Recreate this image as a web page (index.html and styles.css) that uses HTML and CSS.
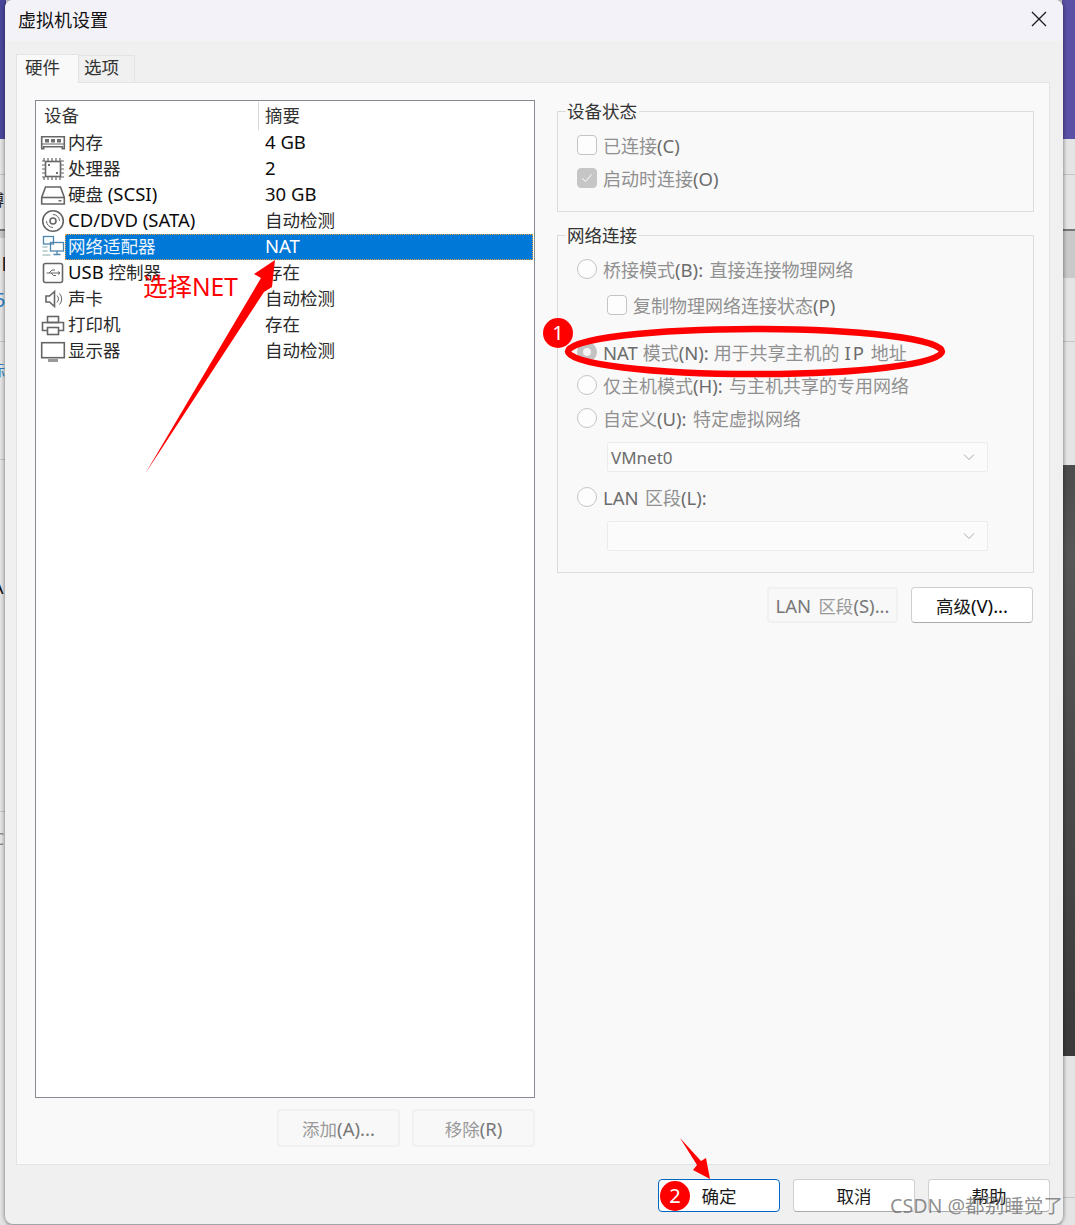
FILE: index.html
```html
<!DOCTYPE html>
<html lang="zh-CN">
<head>
<meta charset="utf-8">
<title>虚拟机设置</title>
<link rel="stylesheet" href="styles.css">
</head>
<body>
<div class="page">
  <div class="backdrop backdrop-left">
    <div class="band band-purple h139"></div>
    <div class="band h36 line-b"></div>
    <div class="band h54"><span class="frag frag-top">博</span></div>
    <div class="band band-gray h9"></div>
    <div class="band h104 line-b"><span class="frag frag-black">|||</span><span class="frag frag-five">5</span></div>
    <div class="band h118 line-b"><span class="frag frag-blue">标</span></div>
    <div class="band h352 line-b"><span class="frag frag-a">A</span></div>
    <div class="band h413"><span class="frag frag-c">CU</span></div>
  </div>
  <div class="backdrop backdrop-right">
    <div class="band band-purple h139"></div>
    <div class="band h36 line-b"></div>
    <div class="band h54"></div>
    <div class="band band-gray h49"></div>
    <div class="band h64 line-b"></div>
    <div class="band h123"></div>
    <div class="band band-dark h591"></div>
    <div class="band h142 line-b"></div>
    <div class="band h27"></div>
  </div>

  <main class="dialog">
    <header class="titlebar">
      <h1 class="title">虚拟机设置</h1>
      <svg class="close" viewBox="0 0 16 16" width="16" height="16"><path d="M1 1L15 15M15 1L1 15"/></svg>
    </header>

    <nav class="tabs">
      <div class="tab tab-active">硬件</div>
      <div class="tab">选项</div>
    </nav>

    <section class="panel">
      <div class="left-col">
        <div class="device-list">
          <div class="list-head">
            <div class="head-device">设备</div>
            <div class="head-summary">摘要</div>
          </div>

          <div class="row">
            <svg class="ico" viewBox="0 0 26 26"><path d="M1.700 6.700h22.600v12h-2v-2h-18.600v2h-2z"/><path class="t" d="M1.700 14h22.600"/><rect class="f" x="5" y="9" width="4" height="3.500"/><rect class="f" x="11" y="9" width="4" height="3.500"/><rect class="f" x="17" y="9" width="4" height="3.500"/></svg>
            <div class="cells"><span class="name">内存</span><span class="sum"><span class="l">4 GB</span></span></div>
          </div>
          <div class="row">
            <svg class="ico" viewBox="0 0 26 26"><rect x="5.500" y="5.500" width="15" height="15"/><path class="d" d="M4 2v3M8 2v3M12 2v3M16 2v3M20 2v3M4 21v3M8 21v3M12 21v3M16 21v3M20 21v3M2 5h3M2 9h3M2 13h3M2 17h3M2 21h3M21 5h3M21 9h3M21 13h3M21 17h3M21 21h3"/><rect class="f" x="8" y="8" width="2" height="2"/><rect class="f" x="16" y="16" width="2" height="2"/></svg>
            <div class="cells"><span class="name">处理器</span><span class="sum"><span class="l">2</span></span></div>
          </div>
          <div class="row">
            <svg class="ico" viewBox="0 0 26 26"><path d="M5.500 5h15l3.800 10.500v6.500h-22.600v-6.500z"/><path d="M1.700 15.500h22.600"/><rect class="f" x="18.500" y="18" width="3" height="1.500"/></svg>
            <div class="cells"><span class="name">硬盘<span class="l"> (SCSI)</span></span><span class="sum"><span class="l">30 GB</span></span></div>
          </div>
          <div class="row">
            <svg class="ico" viewBox="0 0 26 26"><circle cx="13" cy="13" r="10.300"/><circle cx="13" cy="13" r="3"/><path class="t" d="M13 6.500a6.500 6.500 0 0 1 6.500 6.500M6.500 13a6.500 6.500 0 0 0 6.500 6.500"/></svg>
            <div class="cells"><span class="name"><span class="l">CD/DVD (SATA)</span></span><span class="sum">自动检测</span></div>
          </div>
          <div class="row">
            <svg class="ico ico-net" viewBox="0 0 26 26"><rect x="3.500" y="2.500" width="10" height="7.500"/><rect x="10.500" y="8.500" width="13" height="8.500"/><path d="M17 17v3M13.500 20.500h7"/><path class="d" d="M2.500 13h5M2.500 17h5M2.500 21h8"/></svg>
            <div class="cells cells-selected"><span class="name">网络适配器</span><span class="sum"><span class="l">NAT</span></span></div>
          </div>
          <div class="row">
            <svg class="ico" viewBox="0 0 26 26"><rect x="3.500" y="3.500" width="19" height="19" rx="2"/><path class="t" d="M6.500 13h13M9 13l3-3h3M11 13l2.500 2.500h2.500"/><path class="t" d="M18 11.500l2 1.500-2 1.500"/></svg>
            <div class="cells"><span class="name"><span class="l">USB </span>控制器</span><span class="sum">存在</span></div>
          </div>
          <div class="row">
            <svg class="ico" viewBox="0 0 26 26"><path d="M6 10h3.500l5-4.500v15l-5-4.500h-3.500z"/><path class="t" d="M17 9.500a5 5 0 0 1 0 7M19.500 7.500a8 8 0 0 1 0 11"/></svg>
            <div class="cells"><span class="name">声卡</span><span class="sum">自动检测</span></div>
          </div>
          <div class="row">
            <svg class="ico" viewBox="0 0 26 26"><rect x="7.500" y="4.500" width="11" height="6"/><path d="M7 18.500h-4.500v-8h21v8h-4.500"/><rect x="7.500" y="15.500" width="11" height="7"/></svg>
            <div class="cells"><span class="name">打印机</span><span class="sum">存在</span></div>
          </div>
          <div class="row">
            <svg class="ico" viewBox="0 0 26 26"><rect x="1.700" y="4.700" width="22.600" height="15"/><path class="w" d="M8 22.500h10"/></svg>
            <div class="cells"><span class="name">显示器</span><span class="sum">自动检测</span></div>
          </div>
        </div>

        <div class="btn-row btn-row-left">
          <button class="btn btn-off btn-add" disabled>添加<span class="l">(A)...</span></button>
          <button class="btn btn-off btn-add" disabled>移除<span class="l">(R)</span></button>
        </div>
      </div>

      <div class="right-col">
        <fieldset class="group group-status">
          <legend class="legend">设备状态</legend>
          <div class="opt"><span class="box"></span><span class="opt-text">已连接<span class="l">(C)</span></span></div>
          <div class="opt"><span class="box box-checked"><svg viewBox="0 0 20 20" width="20" height="20"><path d="M5.500 10.500l3 3 6-7"/></svg></span><span class="opt-text">启动时连接<span class="l">(O)</span></span></div>
        </fieldset>

        <fieldset class="group group-net">
          <legend class="legend">网络连接</legend>
          <div class="opt"><span class="radio"></span><span class="opt-text">桥接模式<span class="l">(B): </span>直接连接物理网络</span></div>
          <div class="opt opt-sub"><span class="box"></span><span class="opt-text">复制物理网络连接状态<span class="l">(P)</span></span></div>
          <div class="opt opt-nat"><span class="radio radio-on"></span><span class="opt-text nat-text"><span class="l">NAT </span>模式<span class="l">(N): </span>用于共享主机的<span class="l"> </span><span class="l l-wide">IP</span><span class="l"> </span>地址</span></div>
          <div class="opt"><span class="radio"></span><span class="opt-text">仅主机模式<span class="l">(H): </span>与主机共享的专用网络</span></div>
          <div class="opt"><span class="radio"></span><span class="opt-text">自定义<span class="l">(U): </span>特定虚拟网络</span></div>
          <div class="combo combo-first"><span>VMnet0</span><svg viewBox="0 0 12 8" width="12" height="8"><path d="M1 1.500l5 5 5-5"/></svg></div>
          <div class="opt opt-lan"><span class="radio"></span><span class="opt-text"><span class="l">LAN </span>区段<span class="l">(L):</span></span></div>
          <div class="combo combo-second"><span></span><svg viewBox="0 0 12 8" width="12" height="8"><path d="M1 1.500l5 5 5-5"/></svg></div>
        </fieldset>

        <div class="btn-row btn-row-right">
          <button class="btn btn-off btn-lan" disabled><span class="l">LAN </span>区段<span class="l">(S)...</span></button>
          <button class="btn btn-adv">高级<span class="l">(V)...</span></button>
        </div>
      </div>
    </section>

    <footer class="footer">
      <button class="btn btn-foot btn-primary">确定</button>
      <button class="btn btn-foot">取消</button>
      <button class="btn btn-foot">帮助</button>
    </footer>
  </main>

  <svg class="marks" viewBox="0 0 1075 1225" width="1075" height="1225">
    <ellipse class="ring" cx="755" cy="351.500" rx="187" ry="22.500"/>
    <polygon class="arrow" points="145,474 261,278 254,274 275,260 272,287 264,292"/>
    <polygon class="arrow" points="680,1138 701,1161 706,1158 710,1179 693,1170 697,1165"/>
  </svg>
  <span class="note">选择NET</span>
  <span class="badge badge-one">1</span>
  <span class="badge badge-two">2</span>
  <span class="watermark">CSDN @都别睡觉了</span>
</div>
</body>
</html>
```

FILE: styles.css
```css
* { box-sizing: border-box; }
html, body { margin: 0; padding: 0; }
body {
  width: 1075px;
  height: 1225px;
  overflow: hidden;
  background: #d4d4d4;
  font-family: "Noto Sans", "Noto Sans CJK SC", sans-serif;
  font-size: 17.500px;
  color: #2a2a2a;
}
.page { position: relative; width: 1075px; height: 1225px; overflow: hidden; }

/* latin runs are set a little larger than the CJK around them */
.l { font-size: 18.500px; color: #0c0c0c; }
.l-wide { letter-spacing: 2px; }

/* desktop behind the dialog */
.backdrop { position: absolute; top: 0; display: flex; flex-direction: column; overflow: hidden; }
.backdrop-left { left: 0; width: 6px; height: 1225px; }
.backdrop-right { right: 0; width: 13px; height: 1225px; }
.band { background: #e4e4e4; flex: none; position: relative; }
.band-purple { background: #5a51a6; }
.backdrop-left .band-purple { background: #4a469c; }
.band-gray { background: #c9c9c9; border-top: 2px solid #777; }
.band-dark { background: linear-gradient(180deg, #4c4c4c, #565656 15%, #474747 60%, #3a3a3a); }
.line-b { border-bottom: 1px solid #c4c4c4; }
.h139 { height: 139px; }
.h36 { height: 36px; }
.h54 { height: 54px; }
.h9 { height: 9px; }
.h49 { height: 49px; }
.h64 { height: 64px; }
.h104 { height: 104px; }
.h118 { height: 118px; }
.h123 { height: 123px; }
.h352 { height: 352px; }
.h413 { height: 413px; }
.h591 { height: 591px; }
.h142 { height: 142px; }
.h27 { height: 27px; }
.frag { position: absolute; white-space: nowrap; line-height: 20px; }
.frag-top { top: 15px; left: -12px; font-size: 16px; color: #222; }
.frag-black { top: 14px; left: 0; font-size: 15px; font-weight: 700; color: #111; }
.frag-five { top: 52px; left: -6px; font-size: 20px; color: #2f7fc4; }
.frag-blue { top: 18px; left: -11px; font-size: 16px; color: #2f7fc4; }
.frag-a { top: 117px; left: -8px; font-size: 18px; color: #111; }
.frag-c { top: 17px; left: -6px; font-size: 16px; color: #888; }

/* dialog window */
.dialog {
  position: relative;
  margin-left: 5px;
  width: 1058px;
  height: 1224px;
  display: flex;
  flex-direction: column;
  background: #f0f0f0;
  border-radius: 8px;
  box-shadow: 0 0 4px rgba(0,0,0,.55);
}
.titlebar {
  flex: none;
  height: 41px;
  display: flex;
  align-items: center;
  justify-content: space-between;
  padding: 0 16px 3px 13px;
  background: #f3f2f9;
  border-radius: 8px 8px 0 0;
}
.title { margin: 0; font-size: 18px; font-weight: 400; color: #111; }
.close path { fill: none; stroke: #1a1a1a; stroke-width: 1.300; }

.tabs { flex: none; display: flex; align-items: flex-end; height: 41px; padding-left: 11px; }
.tab {
  width: 56px;
  height: 27px;
  line-height: 23px;
  padding-left: 5px;
  border: 1px solid #e3e3e3;
  border-bottom: 0;
  border-left: 0;
  background: #f0f0f0;
  color: #333;
}
.tab-active {
  width: 63px;
  height: 29px;
  margin-bottom: -1px;
  padding-left: 8px;
  line-height: 24px;
  border-left: 1px solid #e3e3e3;
  background: #f9f9f9;
  position: relative;
  z-index: 1;
}

.panel {
  flex: none;
  margin: 0 13px 0 11px;
  height: 1083px;
  padding: 17px 15px 0 18px;
  display: flex;
  gap: 22px;
  background: #f9f9f9;
  border: 1px solid #e3e3e3;
}
.left-col { width: 500px; flex: none; }
.right-col { width: 477px; flex: none; }

/* device list */
.device-list {
  height: 998px;
  background: #fff;
  border: 1px solid #868a91;
}
.list-head { display: flex; height: 29px; line-height: 27px; color: #333; padding-top: 1px; }
.head-device { width: 223px; padding-left: 8px; border-right: 1px solid #d9d9d9; }
.head-summary { padding-left: 6px; }
.row { display: flex; height: 26px; }
.ico { flex: none; width: 26px; height: 26px; margin: 0 -1px 0 4px; }
.ico * { fill: none; stroke: #666; stroke-width: 1.600; }
.ico .t { stroke-width: 1; }
.ico .d { stroke-width: 1.200; }
.ico .w { stroke-width: 3; stroke: #999; }
.ico .f { fill: #707070; stroke: none; }
.ico-net * { stroke: #4f86ad; stroke-width: 1.300; }
.ico-net .d { stroke: #8aa; }
.cells {
  flex: 1;
  display: flex;
  margin-right: 1px;
  line-height: 22px;
  border: 1px dotted transparent;
}
.cells-selected { background: #0078d7; border-color: #e9a03c; color: #eaf3fb; }
.cells-selected .l { color: #fff; }
.name { width: 199px; padding-left: 2px; white-space: nowrap; }

/* buttons */
.btn {
  font: inherit;
  padding: 0;
  background: #fff;
  border: 1px solid #cfcfcf;
  border-bottom-color: #ababab;
  border-radius: 4px;
  color: #1a1a1a;
}
.btn-off {
  background: #f8f8f8;
  border: 1px solid #ececec;
  border-radius: 4px;
  outline: 2px solid #f1f1f1;
  outline-offset: -2px;
  color: #9a9a9a;
}
.btn-off .l { color: #777; }
.btn-row { display: flex; justify-content: flex-end; }
.btn-row-left { gap: 12px; margin-top: 11px; }
.btn-add { width: 123px; height: 38px; }
.btn-row-right { gap: 13px; margin-top: 14px; padding-right: 1px; }
.btn-lan { width: 131px; height: 36px; }
.btn-adv { width: 122px; height: 36px; }

/* group boxes */
.group {
  margin: 0;
  min-width: 0;
  padding: 5px 0 0 19px;
  border: 1px solid #dcdcdc;
}
.group-status { height: 113px; margin-top: -1px; }
.group-net { margin-top: 11px; padding-bottom: 21px; }
.legend { height: 24px; line-height: 24px; padding: 0 2px 0 1px; margin-left: -11px; color: #333; }
.opt { display: flex; align-items: center; gap: 6px; height: 33px; font-size: 18px; color: #909090; }
.opt .l { color: #6c6c6c; word-spacing: 1.500px; }
.nat-text .l { word-spacing: 0; }
.opt-sub { margin: 3px 0 0 30px; }
.opt-nat { margin-top: 14px; }
.opt-lan { margin-top: 8px; }
.opt-text { white-space: nowrap; }
.btn-lan .l { word-spacing: 2.500px; }
.box {
  flex: none;
  width: 20px;
  height: 20px;
  background: #fdfdfd;
  border: 1px solid #c4c4c4;
  border-radius: 4px;
}
.box-checked { background: #c6c6c6; border-color: #c6c6c6; }
.box-checked svg { display: block; margin: -1px; }
.box-checked path { fill: none; stroke: #fff; stroke-width: 1; }
.radio {
  flex: none;
  width: 20px;
  height: 20px;
  border: 1px solid #c4c4c4;
  border-radius: 50%;
  background: #fdfdfd;
}
.radio-on { border: 6px solid #c2c2c2; background: #f4f4f4; }
.combo {
  margin-left: 30px;
  width: 381px;
  height: 30px;
  padding: 0 12px 0 3px;
  display: flex;
  align-items: center;
  justify-content: space-between;
  background: #fbfbfb;
  border: 1px solid #ececec;
  border-radius: 2px;
  color: #6c6c6c;
  font-size: 17px;
}
.combo path { fill: none; stroke: #a8a8a8; stroke-width: 1; }
.combo-first { margin-top: 8px; }
.combo-second { margin-top: 8px; }

/* footer */
.footer {
  flex: 1;
  display: flex;
  justify-content: flex-end;
  gap: 13px;
  padding: 14px 13px 0 0;
}
.btn-foot { width: 122px; height: 33px; }
.btn-primary { border: 1.500px solid #0067c0; }

/* annotations on the screenshot */
.marks { position: absolute; left: 0; top: 0; pointer-events: none; }
.ring { fill: none; stroke: #f00; stroke-width: 6.500; }
.arrow { fill: #f00; }
.note { position: absolute; left: 143px; top: 270px; font-size: 24.500px; line-height: 34px; color: #f00; white-space: nowrap; }
.badge {
  position: absolute;
  width: 30px;
  height: 30px;
  border-radius: 50%;
  background: #f00;
  color: #fff;
  text-align: center;
  font-size: 20px;
  line-height: 30px;
}
.badge-one { left: 543px; top: 318px; }
.badge-two { left: 660px; top: 1181px; }
.watermark {
  position: absolute;
  left: 890px;
  top: 1193px;
  font-size: 19.600px;
  line-height: 26px;
  color: rgba(100,100,100,.72);
  white-space: nowrap;
}
```
